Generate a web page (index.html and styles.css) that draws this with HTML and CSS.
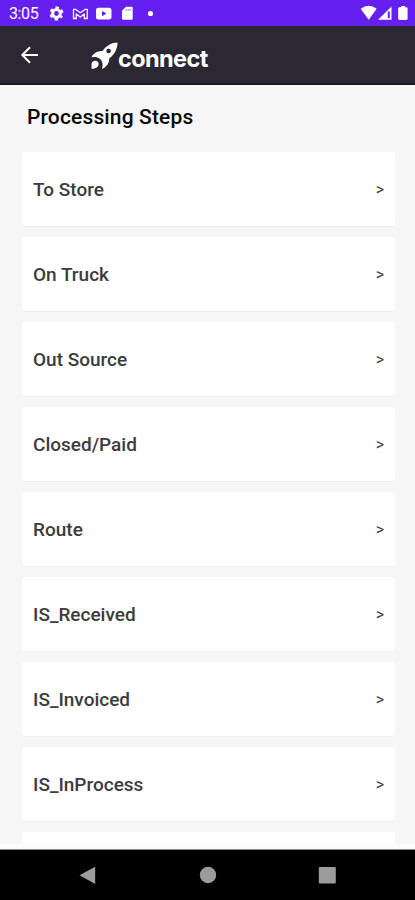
FILE: index.html
```html
<!DOCTYPE html>
<html lang="en">
<head>
<meta charset="utf-8">
<title>Processing Steps</title>
<link rel="stylesheet" href="styles.css">
</head>
<body>
<div class="screen">
  <div class="status">
    <span class="time">3:05</span>
    <svg class="status-left" width="110" height="26" viewBox="0 0 110 26">
      <circle cx="11.500" cy="13.500" r="3.900" fill="none" stroke="#fff" stroke-width="3"/>
      <circle cx="11.500" cy="13.500" r="5.900" fill="none" stroke="#fff" stroke-width="2.200" stroke-dasharray="3.200 2.978" stroke-dashoffset="1.600" transform="rotate(30 11.500 13.500)"/>
      <path d="M28.500 18.500V9.300H30.500L35.300 12.700L40.300 9.300H42.300V18.500H39.300V14L35.300 17L31.300 14V18.500Z" fill="none" stroke="#fff" stroke-width="1.300" stroke-linejoin="round"/>
      <path fill="#fff" fill-rule="evenodd" d="M53.500 7.700H64Q66.500 7.700 66.500 10.200V17Q66.500 19.500 64 19.500H53.500Q51 19.500 51 17V10.200Q51 7.700 53.500 7.700ZM57 11V16.200L61.500 13.600Z"/>
      <path fill="#fff" fill-rule="evenodd" d="M81 6.700H86.500Q87.700 6.700 87.700 7.900V18.500Q87.700 19.700 86.500 19.700H78.200Q77 19.700 77 18.500V10.700ZM80.800 9V10.700H81.500V9ZM82.800 9V10.700H83.500V9ZM84.800 9V10.700H85.500V9Z"/>
      <circle cx="105.500" cy="13.500" r="2.600" fill="#fff"/>
    </svg>
    <svg class="status-right" width="55" height="26" viewBox="0 0 55 26">
      <path fill="#fff" d="M.7 8.700Q8.700 2.700 16.700 8.700L8.700 19.800Z"/>
      <path fill="#fff" d="M31.500 6.500V19.700H18Z"/>
      <path fill="#651fef" d="M27.800 11.500H29.800V18.200H27.800Z"/>
      <path fill="#fff" d="M41 6H45V7.300H46.500Q47.600 7.300 47.600 8.400V18.800Q47.600 19.900 46.500 19.900H39.300Q38.200 19.900 38.200 18.800V8.400Q38.200 7.300 39.300 7.300H41Z"/>
    </svg>
  </div>
  <header class="bar">
    <svg class="back" width="20" height="20" viewBox="0 0 20 20"><path d="M19 10H3.500M11 2.300L3.300 10L11 17.700" fill="none" stroke="#fff" stroke-width="2"/></svg>
    <div class="logo">
      <svg class="rocket" width="28" height="28" viewBox="0 0 28 28">
        <path fill="#fff" fill-rule="evenodd" d="M26.500 .5C20.500 .5 15.500 3.500 11.500 9C6.500 9 2.500 11 .3 15.400C3.200 14.700 6 15 8 16.300C10.200 17.500 11.200 19.500 11.500 21.500C11.700 23 11.500 25 11 27C15.500 25 18.400 21 18.200 16.500C23.500 12.500 26.500 7 26.500 .5ZM19.900 9A2.300 2.300 0 1 0 15.300 9A2.300 2.300 0 1 0 19.900 9Z"/>
        <path fill="#fff" d="M.5 26.800V22.500C.5 17.500 7.600 17.700 7.600 21.800C7.600 25 5 26.800 .5 26.800Z"/>
      </svg>
      <span class="brand">connect</span>
    </div>
  </header>
  <main class="content">
    <h1>Processing Steps</h1>
    <div class="list">
      <div class="card"><span>To Store</span><i>&gt;</i></div>
      <div class="card"><span>On Truck</span><i>&gt;</i></div>
      <div class="card"><span>Out Source</span><i>&gt;</i></div>
      <div class="card"><span>Closed/Paid</span><i>&gt;</i></div>
      <div class="card"><span>Route</span><i>&gt;</i></div>
      <div class="card"><span>IS_Received</span><i>&gt;</i></div>
      <div class="card"><span>IS_Invoiced</span><i>&gt;</i></div>
      <div class="card"><span>IS_InProcess</span><i>&gt;</i></div>
      <div class="card"></div>
    </div>
  </main>
  <div class="edge"></div>
  <nav class="nav">
    <svg width="415" height="50" viewBox="0 0 415 50" fill="#9c9c9c">
      <path d="M79.500 25.300L95.200 16.800V34Z"/>
      <circle cx="208" cy="25" r="8.200"/>
      <rect x="318.800" y="17" width="17" height="16.600" rx="1"/>
    </svg>
  </nav>
</div>
</body>
</html>
```
FILE: styles.css
```css
* { box-sizing: border-box; }
body { margin: 0; font-family: Roboto, "Liberation Sans", sans-serif; }
svg { display: block; flex: none; }
.screen { width: 415px; height: 900px; display: flex; flex-direction: column; overflow: hidden; background: #f6f6f6; }
.status { height: 26px; flex: none; display: flex; background: #651fef; color: #fff; }
.time { width: 45px; padding-left: 9px; font-size: 16px; line-height: 28px; letter-spacing: -.4px; white-space: nowrap; }
.status-right { margin-left: auto; }
.bar { height: 59px; flex: none; display: flex; background: #2b2733; border-bottom: 2px solid #1b1722; color: #fff; }
.back { margin: 19px 0 0 19px; }
.logo { display: flex; margin: 16px 0 0 52px; }
.brand { margin: 1px 0 0 -1px; font-family: Inter, "Liberation Sans", sans-serif; font-weight: 700; font-size: 23.5px; line-height: 32px; letter-spacing: -0.6px; }
.content { height: 759px; flex: none; overflow: hidden; padding: 0 20px 0 22px; }
h1 { margin: 18px 0 20px 5px; font-size: 21px; line-height: 29px; font-weight: 500; color: #0a0a0a; letter-spacing: .15px; white-space: nowrap; }
.list { display: flex; flex-direction: column; gap: 11px; }
.card { height: 74px; flex: none; display: flex; align-items: center; justify-content: space-between; padding: 1px 11px 0; background: #fff; border-radius: 3px; box-shadow: 0 1px 1px rgba(0,0,0,.03); font-size: 19px; font-weight: 500; color: #3c3c3c; letter-spacing: 0; white-space: nowrap; }
.card i { font-style: normal; font-size: 16px; font-weight: 400; color: #444; letter-spacing: 0; }
.edge { height: 6px; flex: none; background: #fcfcfc; border-bottom: 1px solid #8a8a8a; }
.nav { height: 50px; flex: none; background: #000; }
```
